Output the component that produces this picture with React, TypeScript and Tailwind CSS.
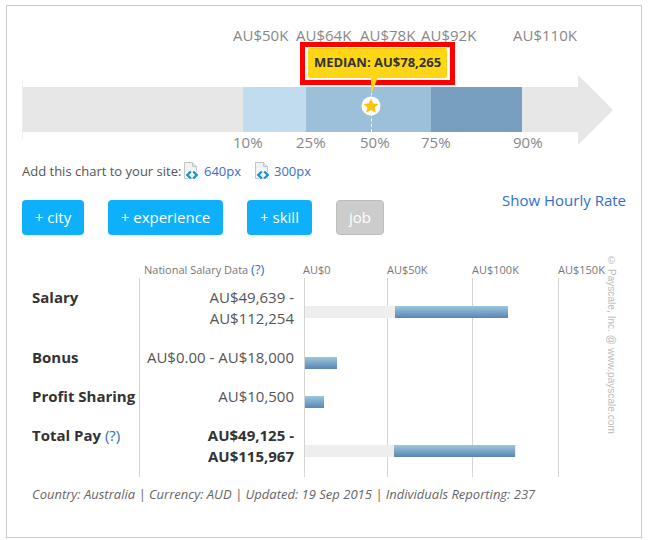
import type { ReactNode } from "react";

const FONT = "font-['Open_Sans',sans-serif]";

const scale = [
  { value: "AU$50K", pct: "10%", width: "w-[63px]" },
  { value: "AU$64K", pct: "25%", width: "w-[64px]" },
  { value: "AU$78K", pct: "50%", width: "w-[61px]" },
  { value: "AU$92K", pct: "75%", width: "w-[92px]" },
  { value: "AU$110K", pct: "90%", width: "w-[60px]" },
];

function EmbedIcon() {
  return (
    <svg width="17" height="18" viewBox="0 0 17 18" className="shrink-0">
      <path d="M1.500 0.500h8l4 4v12h-12z" fill="#f2f2f2" stroke="#c4c4c4" />
      <path d="M9.500 0.500v4h4" fill="#e0e0e0" stroke="#c4c4c4" />
      <path d="M7.800 9.500 4.300 13l3.500 3.500" fill="none" stroke="#fff" strokeWidth="4" />
      <path d="M10.200 9.500 13.700 13l-3.500 3.500" fill="none" stroke="#fff" strokeWidth="4" />
      <path d="M7.800 9.500 4.300 13l3.500 3.500" fill="none" stroke="#1b8fd6" strokeWidth="2.400" />
      <path d="M10.200 9.500 13.700 13l-3.500 3.500" fill="none" stroke="#1b8fd6" strokeWidth="2.400" />
    </svg>
  );
}

function Button({ children, className }: { children: ReactNode; className: string }) {
  return (
    <div
      className={`flex h-[35px] items-center justify-center rounded-[4px] text-[15px] text-white ${className}`}
    >
      {children}
    </div>
  );
}

interface RowProps {
  label: ReactNode;
  value: ReactNode;
  barClass: string;
  greyClass?: string;
  blueClass: string;
  valueClass?: string;
  rowClass?: string;
}

function SalaryRow({ label, value, barClass, greyClass, blueClass, valueClass, rowClass }: RowProps) {
  return (
    <div className="flex">
      <div className={`w-[107px] shrink-0 text-[15px] leading-[21px] font-bold text-[#333] ${rowClass ?? ""}`}>
        <div className="-mt-px">{label}</div>
      </div>
      <div
        className={`w-[165px] shrink-0 border-l border-[#d4d4d4] pr-[10px] pb-[19px] text-right text-[15px] leading-[21px] ${rowClass ?? ""} ${valueClass ?? "text-[#555]"}`}
      >
        <div className="-mt-px">{value}</div>
      </div>
      <div className="relative w-[270px] border-l border-[#d4d4d4]">
        <div className="absolute inset-0 flex">
          <div className="h-full w-[83px] border-r border-[#d4d4d4]" />
          <div className="h-full w-[85px] border-r border-[#d4d4d4]" />
          <div className="h-full w-[86px] border-r border-[#d4d4d4]" />
        </div>
        <div className={`relative flex h-[12px] ${barClass}`}>
          {greyClass && <div className={`h-full bg-[#eeeeee] ${greyClass}`} />}
          <div className={`h-full bg-gradient-to-b from-[#9cc8dc] to-[#5a85b3] ${blueClass}`} />
        </div>
      </div>
    </div>
  );
}

export default function App() {
  return (
    <div className={`h-[540px] w-[648px] overflow-hidden bg-white pt-[5px] pl-[6px] ${FONT}`}>
      <div className="relative h-[533px] w-[636px] border border-[#cccccc] pt-[17px] pl-[15px]">
        {/* value labels */}
        <div className="flex h-[24px] pl-[211px] text-[15px] leading-[24px] text-[#888]">
          {scale.map((s) => (
            <div key={s.value} className={`shrink-0 whitespace-nowrap ${s.width}`}>
              {s.value}
            </div>
          ))}
        </div>

        {/* median tooltip */}
        <div className="absolute top-[36px] left-[293px] border-[5px] border-[#ff0000] px-[3px] pt-[1px] pb-[2px]">
          <div className="flex h-[30px] w-[139px] items-center justify-center rounded-[2px] bg-[#ffd616] text-[13px] font-bold whitespace-nowrap text-[#333]">
            MEDIAN: AU$78,265
          </div>
        </div>

        {/* range arrow */}
        <div className="mt-[40px] flex h-[45px] items-center">
          <div className="h-[59px] w-px shrink-0 bg-[#eeeeee]" />
          <div className="h-full w-[220px] bg-[#e7e7e7]" />
          <div className="h-full w-[63px] bg-[#c2dcef]" />
          <div className="flex h-full w-[125px] bg-[#9cc0da] pl-[65px]">
            <div className="h-full w-0 border-l border-dashed border-white" />
          </div>
          <div className="h-full w-[91px] bg-[#789fbf]" />
          <div className="h-full w-[56px] bg-[#e7e7e7]" />
          <svg width="35" height="70" viewBox="0 0 35 70" className="shrink-0">
            <path d="M0 0 35 35 0 70z" fill="#e7e7e7" />
          </svg>
        </div>

        {/* median marker */}
        <svg width="24" height="48" viewBox="0 0 24 48" className="absolute top-[72px] left-[352px]">
          <path d="M12 0h6.500l-6.500 17z" fill="#ffd616" />
          <circle cx="12" cy="28" r="9.500" fill="#fff" />
          <path
            d="M12 20.500l2.300 4.900 5.300.6-3.900 3.600 1.100 5.200-4.800-2.700-4.800 2.700 1.100-5.200-3.900-3.600 5.300-.6z"
            fill="#fdc30c"
          />
        </svg>

        {/* percentile labels */}
        <div className="flex h-[20px] pl-[211px] text-[15px] leading-[20px] text-[#888]">
          {scale.map((s) => (
            <div key={s.pct} className={`shrink-0 ${s.width}`}>
              {s.pct}
            </div>
          ))}
        </div>

        {/* embed links */}
        <div className="mt-[9px] flex h-[20px] items-center text-[13px] leading-[20px] text-[#555]">
          <span className="w-[161px] shrink-0 whitespace-nowrap">Add this chart to your site:</span>
          <EmbedIcon />
          <span className="ml-[4px] w-[50px] text-[#3a6ecb]">640px</span>
          <EmbedIcon />
          <span className="ml-[3px] text-[#3a6ecb]">300px</span>
        </div>

        {/* filter buttons */}
        <div className="mt-[19px] flex items-start pr-[15px]">
          <Button className="w-[62px] bg-[#0fb0fb]">+ city</Button>
          <Button className="ml-[24px] w-[115px] bg-[#0fb0fb]">+ experience</Button>
          <Button className="ml-[24px] w-[65px] bg-[#0fb0fb]">+ skill</Button>
          <Button className="ml-[24px] w-[48px] border border-[#bdbdbd] bg-[#cccccc]">job</Button>
          <div className="-mt-[10px] ml-auto text-[15px] leading-[20px] whitespace-nowrap text-[#2f6fce]">
            Show Hourly Rate
          </div>
        </div>

        {/* table header */}
        <div className="mt-[26px] flex h-[17px] pl-[122px] text-[11px] leading-[17px] whitespace-nowrap text-[#777]">
          <div className="w-[159px] shrink-0">
            National Salary Data <span className="text-[13px] text-[#2f6fce]">(?)</span>
          </div>
          <div className="w-[84px] shrink-0">AU$0</div>
          <div className="w-[85px] shrink-0">AU$50K</div>
          <div className="w-[86px] shrink-0">AU$100K</div>
          <div className="shrink-0">AU$150K</div>
        </div>

        {/* salary rows */}
        <div className="pl-[10px]">
          <SalaryRow
            label="Salary"
            value={
              <>
                AU$49,639 -<br />
                AU$112,254
              </>
            }
            rowClass="pt-[10px]"
            barClass="mt-[28px]"
            greyClass="w-[90px]"
            blueClass="w-[113px]"
          />
          <SalaryRow
            label="Bonus"
            value="AU$0.00 - AU$18,000"
            barClass="mt-[9px]"
            blueClass="w-[32px]"
          />
          <SalaryRow
            label={<span className="whitespace-nowrap">Profit Sharing</span>}
            value="AU$10,500"
            barClass="mt-[9px]"
            blueClass="w-[19px]"
          />
          <div className="[&>div>div:nth-child(2)]:pb-[10px]">
            <SalaryRow
              label={
                <>
                  Total Pay <span className="font-normal text-[#2f6fb0]">(?)</span>
                </>
              }
              value={
                <>
                  AU$49,125 -<br />
                  AU$115,967
                </>
              }
              valueClass="font-bold text-[#333]"
              barClass="mt-[19px]"
              greyClass="w-[89px]"
              blueClass="w-[122px] border-r border-[#e8eef5]"
            />
          </div>
        </div>

        {/* footer */}
        <div className="mt-[8px] pl-[10px] text-[13px] leading-[18px] whitespace-nowrap text-[#666] italic">
          Country: Australia | Currency: AUD | Updated: 19 Sep 2015 | Individuals Reporting: 237
        </div>

        {/* watermark */}
        <div className="absolute top-[249px] left-[598px] font-['Liberation_Sans',sans-serif] text-[10px] leading-[13px] tracking-[0.06px] whitespace-nowrap text-[#bbbbbb] [writing-mode:vertical-rl]">
          © Payscale, Inc. @ www.payscale.com
        </div>
      </div>
    </div>
  );
}
